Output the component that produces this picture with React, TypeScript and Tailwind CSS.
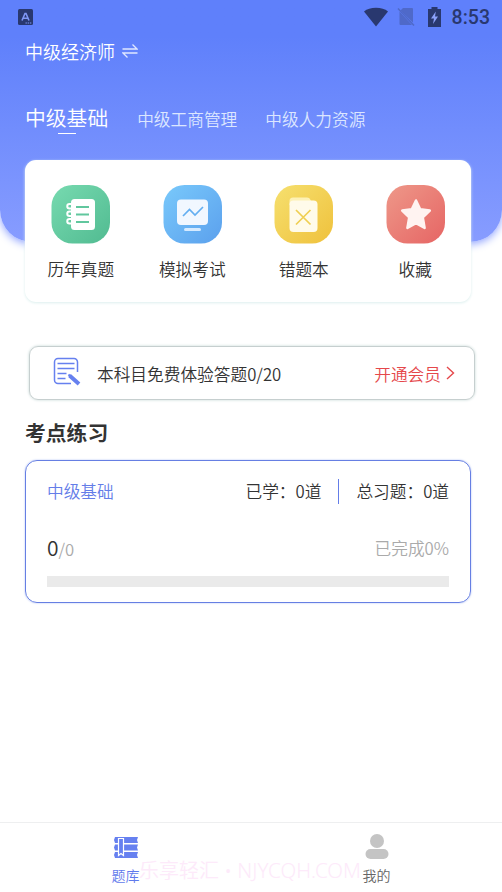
import type { ReactNode } from 'react'

interface IShortcutProps {
  label: string
  colors: [string, string]
  children: ReactNode
}

function Shortcut({ label, colors, children }: IShortcutProps) {
  const gradientId = `tile-${colors[0].slice(1)}`

  return (
    <button className="flex flex-col items-center flex-1">
      <svg width="59" height="59" viewBox="0 0 59 59">
        <defs>
          <linearGradient id={gradientId} x1="0" y1="0" x2="1" y2="1">
            <stop offset="0" stopColor={colors[0]} />
            <stop offset="1" stopColor={colors[1]} />
          </linearGradient>
        </defs>
        <rect x="0.500" width="58.500" height="58.500" rx="21" fill={`url(#${gradientId})`} />
        {children}
      </svg>
      <span className="mt-[13px] text-[16.7px] leading-6 text-[#333]">
        {label}
      </span>
    </button>
  )
}

function StatusBar() {
  return (
    <div className="flex items-center h-[34px] pl-[18px] pr-[12px] text-[#29386f]">
      <svg width="15" height="16" viewBox="0 0 15 16">
        <rect width="15" height="16" rx="1.5" fill="currentColor" />
        <path
          d="M4 11.5L7 4.5h1l3 7M5.2 9.3h4.6"
          fill="none"
          stroke="#7f97f5"
          strokeWidth="1.6"
        />
        <path d="M7.5 14h6" stroke="#7f97f5" strokeDasharray="1.4 0.8" />
      </svg>

      <div className="flex items-center ml-auto">
        <svg width="26" height="20" viewBox="0 0 26 20">
          <path
            d="M1 4.500C4 2 8 .8 13 .8S22 2 25 4.500L13 19.500z"
            fill="currentColor"
          />
        </svg>
        <svg className="ml-[8px]" width="18" height="20" viewBox="0 0 18 20">
          <path
            d="M6 1h9a1 1 0 0 1 1 1v13.500L3.500 3.500zM2.500 4.500L15 18H3.500a1 1 0 0 1-1-1z"
            fill="#4f69c9"
          />
          <path d="M1 1.500L17 18.500" stroke="#4f69c9" strokeWidth="1.6" />
        </svg>
        <svg className="ml-[13px]" width="13" height="20" viewBox="0 0 13 20">
          <path
            d="M3.500 0h6v2H13v18H0V2h3.500z"
            fill="currentColor"
          />
          <path d="M7.800 4.500L3 11.500h3L5 17l5-7.500H7z" fill="#8ba1fb" />
        </svg>
        <span className="ml-[11px] mt-[2px] font-[Roboto] text-[19.5px] leading-6 font-medium">
          8:53
        </span>
      </div>
    </div>
  )
}

function Shortcuts() {
  return (
    <section className="flex h-[142px] mx-[25px] w-[446px] mt-[18px] pt-[25px] bg-white rounded-[11px] shadow-[0_1px_3px_#dcefee]">
      <Shortcut label="历年真题" colors={['#77dab0', '#51bb91']}>
        <rect x="20" y="14" width="24" height="31" rx="3.500" fill="#fff" />
        <path
          d="M21 19h-2.500a2 2 0 0 0 0 4.500H21M21 26.500h-2.500a2 2 0 0 0 0 4.500H21M21 34h-2.500a2 2 0 0 0 0 4.500H21"
          fill="none"
          stroke="#fff"
          strokeWidth="2"
        />
        <path d="M25 22h13M25 29.500h13M25 37h13" stroke="#61c79e" strokeWidth="2" />
      </Shortcut>
      <Shortcut label="模拟考试" colors={['#79c9fb', '#5ba0ed']}>
        <rect x="14" y="14.500" width="31" height="25.500" rx="4" fill="#f1f7ff" />
        <path
          d="M20 31l6.500-6.500 5.500 5.500 8-8"
          fill="none"
          stroke="#63aef1"
          strokeWidth="1.7"
        />
        <rect x="21" y="43" width="17" height="3" rx="1.500" fill="#d5eaff" />
      </Shortcut>
      <Shortcut label="错题本" colors={['#f6e06f', '#efc13c']}>
        <path
          d="M15.500 20v-4a3.500 3.500 0 0 1 3.500-3.500h14c2 0 3 1 4 3.500z"
          fill="#fdf1b5"
        />
        <rect x="15.500" y="15.500" width="28" height="31.500" rx="4" fill="#fffbea" />
        <path d="M22 25l14.500 14.500M36.500 25L22 39.500" stroke="#efcf52" strokeWidth="1.700" />
      </Shortcut>
      <Shortcut label="收藏" colors={['#ee9889', '#e66564']}>
        <path
          d="M30 15.500l4.200 8.800 9.600 1.300-7 6.800 1.800 10.600-8.600-4.800-8.600 4.800 1.800-10.600-7-6.800 9.600-1.300z"
          fill="#fff3f1"
          stroke="#fff3f1"
          strokeWidth="2.500"
          strokeLinejoin="round"
        />
      </Shortcut>
    </section>
  )
}

function MemberNotice() {
  return (
    <section className="flex items-center h-[54px] ml-[29px] mr-[27px] pl-[22px] pr-[19px] border border-[#c6cfcf] rounded-[9px] shadow-[0_0_3px_#c4d6d4]">
      <svg className="-mt-[2px]" width="29" height="30" viewBox="0 0 29 30" fill="none" stroke="#6680ef">
        <path
          d="M25.500 15V5a3.500 3.500 0 0 0-3.500-3.500H6A3.500 3.500 0 0 0 2.500 5v18A3.500 3.500 0 0 0 6 26.500h13"
          strokeWidth="1.5"
        />
        <path d="M5.500 6.500h17M5.500 11.500h17M5.500 16.500h9M5.500 21.500h8" strokeWidth="1.4" />
        <path d="M17.500 18.500L27 27" strokeWidth="4" />
        <path d="M16.500 17.500l2 2" strokeWidth="2" />
      </svg>
      <span className="ml-[16px] mt-px text-[16.7px] leading-6 text-[#333]">
        本科目免费体验答题0/20
      </span>
      <span className="ml-auto mt-px text-[16.7px] leading-6 text-[#e5484b]">
        开通会员
      </span>
      <svg className="ml-[5px]" width="9" height="14" viewBox="0 0 9 14">
        <path d="M1 1l6.500 6L1 13" fill="none" stroke="#e5484b" strokeWidth="1.4" />
      </svg>
    </section>
  )
}

function PracticeCard() {
  return (
    <section className="h-[143px] w-[446px] mx-[25px] mt-[12px] px-[21px] border border-[#667fe3] rounded-[12px] shadow-[0_0_2px_#a9bbf2] text-[16.7px] text-[#333]">
      <div className="flex items-center h-6 mt-[19px]">
        <span className="text-[#647de8]">中级基础</span>
        <span className="ml-auto">已学：0道</span>
        <span className="w-px h-[25px] -mt-[2px] mx-[17px] bg-[#647de8]" />
        <span>总习题：0道</span>
      </div>
      <div className="flex items-center justify-between h-6 mt-[33px] text-[#aaa]">
        <span className="leading-5 -mt-[3px]">
          <span className="text-[21px] text-[#333]">0</span>/0
        </span>
        <span>已完成0%</span>
      </div>
      <div className="h-[11px] mt-[15px] bg-[#eaeaea]" />
    </section>
  )
}

function TabBar() {
  return (
    <nav className="relative flex h-[70px] mt-auto border-t border-[#eeeff0] text-[14px] leading-5">
      <span className="absolute left-[139px] top-[33px] text-[20px] leading-7 whitespace-nowrap text-[#fdeafa] pointer-events-none">
        乐享轻汇
        <span className="font-['Noto_Sans'] text-[20.5px]"> • NJYCQH.COM</span>
      </span>
      <button className="flex flex-col items-center flex-1 pt-[14px] text-[#5f7aec]">
        <svg width="24" height="21" viewBox="0 0 24 21">
          <path
            d="M1 0h23l-1 3 1 3H1L0 3zM1 7.500h23l-1 3 1 3H1l-1-3zM1 15h23l-1 3 1 3H1l-1-3z"
            fill="#6680f0"
          />
          <path d="M4.500 1.500h5v17l-2.500-2-2.500 2z" fill="#6680f0" stroke="#fff" strokeWidth="1.200" />
        </svg>
        <span className="mt-[7px]">题库</span>
      </button>
      <button className="flex flex-col items-center flex-1 pt-[11px] text-[#666]">
        <svg width="24" height="25" viewBox="0 0 24 25" fill="#c4c4c4">
          <circle cx="12" cy="7" r="7" />
          <rect x="0.500" y="15" width="23" height="10" rx="5" />
        </svg>
        <span className="mt-[6px]">我的</span>
      </button>
    </nav>
  )
}

export default function App() {
  return (
    <div className="flex flex-col w-[502px] h-[892px] overflow-hidden bg-white font-[350] font-['Noto_Sans_CJK_SC',sans-serif]">
      <header className="h-[242px] shrink-0 bg-linear-to-b from-[#5f80fb] from-15% to-[#879cff] rounded-b-[32px] shadow-[0_2px_9px_#8ea2ff]">
        <StatusBar />
        <div className="flex items-center h-[35px] pl-[25px] text-[18px] text-white">
          <span>中级经济师</span>
          <svg className="ml-[7px] -mt-px" width="16" height="16" viewBox="0 0 16 16">
            <path
              d="M0.500 6h14.500L10.500 1.500M15.500 10H1l4.500 4.500"
              fill="none"
              stroke="#dfe7ff"
              strokeWidth="1.3"
            />
          </svg>
        </div>
        <div className="flex items-center h-12 mt-[25px] pl-[25px] text-[16.7px] text-[#dce6ff]">
          <span className="relative -mt-[2px] text-[20.8px] leading-8 text-white">
            中级基础
            <span className="absolute -bottom-px left-1/2 w-[18px] h-px -ml-[9px] bg-white" />
          </span>
          <span className="ml-[29px] mt-[3px]">中级工商管理</span>
          <span className="ml-[28px] mt-[3px]">中级人力资源</span>
        </div>
        <Shortcuts />
      </header>

      <main className="mt-[104px]">
        <MemberNotice />
        <h2 className="mt-[16px] ml-[25px] text-[20.8px] leading-8 font-bold text-[#333]">
          考点练习
        </h2>
        <PracticeCard />
      </main>

      <TabBar />
    </div>
  )
}
